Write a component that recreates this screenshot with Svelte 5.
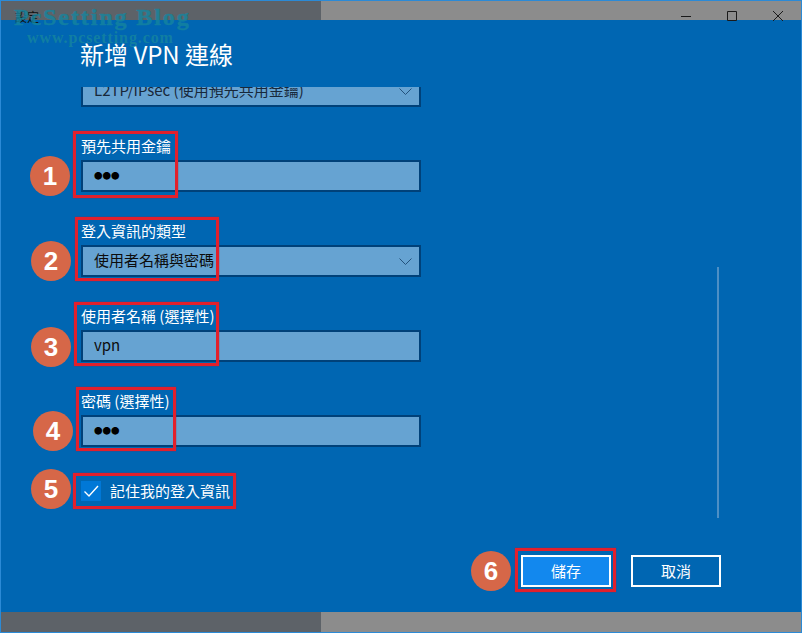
<script lang="ts">
	const badges = [
		{ n: 1, x: 50, y: 176 },
		{ n: 2, x: 51, y: 261 },
		{ n: 3, x: 51, y: 347 },
		{ n: 4, x: 53, y: 431 },
		{ n: 5, x: 51, y: 489 },
		{ n: 6, x: 491, y: 571 }
	];
	const marks = [
		{ x: 73, y: 131, w: 105, h: 67 },
		{ x: 75, y: 217, w: 144, h: 64 },
		{ x: 74, y: 302, w: 145, h: 64 },
		{ x: 76, y: 387, w: 100, h: 64 },
		{ x: 73, y: 473, w: 163, h: 36 },
		{ x: 515, y: 548, w: 101, h: 44 }
	];
</script>

<div class="window">
	<div class="titlebar">
		<span class="app-name">設定</span>
		<div class="controls">
			<svg width="12" height="12" viewBox="0 0 12 12"><path d="M1 6.5h10" /></svg>
			<svg width="12" height="12" viewBox="0 0 12 12"><path d="M1.5 1.5h9v9h-9z" /></svg>
			<svg width="12" height="12" viewBox="0 0 12 12"><path d="M1 1l10 10M11 1L1 11" /></svg>
		</div>
	</div>

	<div class="dialog">
		<h1>新增 VPN 連線</h1>
		<div class="body">
			<div class="scroller">
				<div class="select first">
					<span>L2TP/IPsec (使用預先共用金鑰)</span>
					<svg class="chev" width="13" height="7" viewBox="0 0 13 7"><path d="M.5 .5l6 6 6-6" /></svg>
				</div>

				<label class="field">
					<span class="lbl">預先共用金鑰</span>
					<div class="input dots">●●●</div>
				</label>
				<label class="field">
					<span class="lbl">登入資訊的類型</span>
					<div class="select">
						<span>使用者名稱與密碼</span>
						<svg class="chev" width="13" height="7" viewBox="0 0 13 7"><path d="M.5 .5l6 6 6-6" /></svg>
					</div>
				</label>
				<label class="field">
					<span class="lbl">使用者名稱 (選擇性)</span>
					<div class="input">vpn</div>
				</label>
				<label class="field">
					<span class="lbl">密碼 (選擇性)</span>
					<div class="input dots">●●●</div>
				</label>

				<div class="remember">
					<span class="box">
						<svg width="20" height="20" viewBox="0 0 20 20"><path d="M3.5 10.5l4.5 4.5 9-10" /></svg>
					</span>
					<span>記住我的登入資訊</span>
				</div>
			</div>
			<div class="scrollbar"></div>
		</div>
		<div class="actions">
			<button class="primary">儲存</button>
			<button>取消</button>
		</div>
	</div>

	<div class="bottombar"></div>

	<div class="watermark">
		<div class="wm-big">PcSetting Blog</div>
		<div class="wm-small">www.pcsetting.com</div>
	</div>

	{#each marks as m}
		<div class="mark" style="left:{m.x}px;top:{m.y}px;width:{m.w}px;height:{m.h}px"></div>
	{/each}
	{#each badges as b}
		<div class="badge" style="left:{b.x - 20}px;top:{b.y - 20}px">{b.n}</div>
	{/each}
</div>

<style>
	:global(body) {
		margin: 0;
	}
	.window {
		position: relative;
		box-sizing: border-box;
		width: 802px;
		height: 633px;
		border: 1px solid #2b8ad6;
		display: flex;
		flex-direction: column;
		overflow: hidden;
		font-family: "Noto Sans CJK TC", "Noto Sans", sans-serif;
		background: #0066b2;
	}
	.titlebar {
		height: 19px;
		background: linear-gradient(to right, #5d6268 320px, #8c8c8c 320px);
		position: relative;
		flex: none;
		z-index: 2;
	}
	.app-name {
		position: absolute;
		left: 14px;
		top: 8px;
		font-size: 12px;
		line-height: 16px;
		color: #111;
	}
	.controls {
		position: absolute;
		right: 0;
		top: 9px;
		display: flex;
	}
	.controls svg {
		width: 12px;
		height: 12px;
		margin-right: 34px;
		overflow: visible;
	}
	.controls svg:last-child {
		margin-right: 17px;
	}
	.controls path {
		fill: none;
		stroke: #1a1a1a;
		stroke-width: 1;
	}
	.dialog {
		flex: 1;
		display: flex;
		flex-direction: column;
		min-height: 0;
		color: #fff;
	}
	h1 {
		margin: 0;
		padding: 16px 0 0 79px;
		height: 67px;
		box-sizing: border-box;
		font-size: 24px;
		line-height: 36px;
		font-weight: 400;
		white-space: nowrap;
		flex: none;
	}
	.body {
		flex: none;
		height: 468px;
		position: relative;
		overflow: hidden;
	}
	.scroller {
		padding-left: 80px;
		margin-top: -12px;
	}
	.select,
	.input {
		box-sizing: border-box;
		width: 340px;
		height: 32px;
		border: 2px solid #004179;
		background: #66a3d2;
		color: #0c0c0c;
		font-size: 15px;
		line-height: 26px;
		padding-left: 11px;
		position: relative;
		white-space: nowrap;
	}
	.select.first {
		margin-bottom: 30px;
		color: #17283a;
	}
	.input.dots {
		font-size: 8.5px;
		color: #000;
	}
	.chev {
		position: absolute;
		right: 7px;
		top: 11px;
	}
	.chev path {
		fill: none;
		stroke: #24527c;
		stroke-width: 1;
	}
	.field {
		display: block;
		height: 85px;
	}
	.lbl {
		display: block;
		font-size: 15px;
		line-height: 18px;
		height: 23px;
		white-space: nowrap;
	}
	.remember {
		display: flex;
		align-items: center;
		gap: 9px;
		font-size: 15px;
		line-height: 20px;
		margin-top: 4px;
		color: #fff;
	}
	.box {
		width: 20px;
		height: 20px;
		background: #0078d7;
		display: block;
	}
	.box path {
		fill: none;
		stroke: #fff;
		stroke-width: 1.4;
	}
	.scrollbar {
		position: absolute;
		left: 716px;
		top: 180px;
		width: 2px;
		height: 251px;
		background: #4d8fc5;
	}
	.actions {
		flex: none;
		display: flex;
		gap: 20px;
		padding-left: 520px;
	}
	button {
		box-sizing: border-box;
		width: 90px;
		height: 32px;
		border: 2px solid #fff;
		background: transparent;
		color: #fff;
		font-family: inherit;
		font-size: 15px;
		padding: 0 0 2px;
	}
	.primary {
		background: #1288ee;
	}
	.bottombar {
		margin-top: auto;
		height: 20px;
		flex: none;
		background: linear-gradient(to right, #5d6268 320px, #8c8c8c 320px);
	}
	.watermark {
		position: absolute;
		left: 13px;
		top: 3px;
		z-index: 3;
		font-family: "Liberation Serif", serif;
		font-weight: 700;
		color: #15859f;
		pointer-events: none;
		opacity: 0.8;
		-webkit-text-stroke: 0.5px #15859f;
	}
	.wm-big {
		font-size: 24px;
		line-height: 26px;
		letter-spacing: 1.9px;
		white-space: nowrap;
	}
	.wm-small {
		font-size: 16px;
		line-height: 18px;
		margin-left: 13px;
		margin-top: -1px;
		letter-spacing: 0.9px;
		white-space: nowrap;
		-webkit-text-stroke: 0;
	}
	.mark {
		position: absolute;
		z-index: 4;
		box-sizing: border-box;
		border: 3px solid #e2202c;
		box-shadow: 0 0 1px #a01c3c;
		margin: -1px 0 0 -1px;
	}
	.badge {
		position: absolute;
		z-index: 4;
		width: 40px;
		height: 40px;
		margin: -1px 0 0 -1px;
		border-radius: 50%;
		background: #d66748;
		color: #fff;
		font-family: "Liberation Sans", sans-serif;
		font-weight: 700;
		font-size: 26px;
		line-height: 40px;
		text-align: center;
	}
</style>
